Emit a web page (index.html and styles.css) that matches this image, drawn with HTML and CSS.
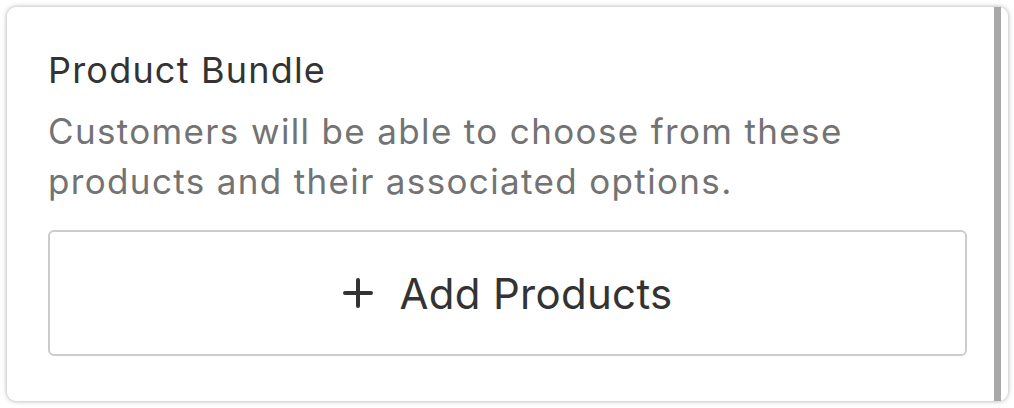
FILE: index.html
```html
<!DOCTYPE html>
<html lang="en">
<head>
<meta charset="utf-8">
<title>Product Bundle</title>
<link rel="stylesheet" href="styles.css">
</head>
<body>
<div class="card">
  <h2 class="title">Product Bundle</h2>
  <p class="desc">Customers will be able to choose from these products and their associated options.</p>
  <button class="add-btn" type="button">
    <svg class="plus" viewBox="0 0 30 30" width="30" height="30" aria-hidden="true">
      <path d="M15 2 V28 M2 15 H28" stroke="#333" stroke-width="4" stroke-linecap="round" fill="none"/>
    </svg>
    <span>Add Products</span>
  </button>
  <div class="scrollbar"></div>
</div>
</body>
</html>
```

FILE: styles.css
```css
html, body {
  margin: 0;
  padding: 0;
  background: #ffffff;
}
body {
  padding: 7px 6px 7px 7px;
  font-family: Inter, Lato, "Liberation Sans", sans-serif;
}
.card {
  position: relative;
  box-sizing: border-box;
  width: 1001px;
  height: 394px;
  background: #fff;
  border-radius: 9px;
  box-shadow: 0 0 5px rgba(0, 0, 0, 0.35);
  padding: 41px 41px 43px 41px;
  display: flex;
  flex-direction: column;
}
.title {
  margin: 0;
  font-size: 36px;
  font-weight: 400;
  line-height: 44px;
  letter-spacing: 1.2px;
  color: #333333;
}
.desc {
  margin: 14px 0 0 0;
  font-size: 35px;
  line-height: 50px;
  letter-spacing: 1.35px;
  color: #737373;
}
.add-btn {
  margin-top: 24px;
  box-sizing: border-box;
  width: 100%;
  height: 126px;
  background: #fff;
  border: 2px solid #cccccc;
  border-radius: 6px;
  display: flex;
  align-items: center;
  justify-content: center;
  gap: 27px;
  font-family: inherit;
  font-size: 42px;
  letter-spacing: 0.3px;
  color: #333333;
  padding: 0;
}
.plus {
  display: block;
}
.scrollbar {
  position: absolute;
  top: 0;
  bottom: 0;
  right: 7px;
  width: 7px;
  background: #a9a9a9;
}
```
